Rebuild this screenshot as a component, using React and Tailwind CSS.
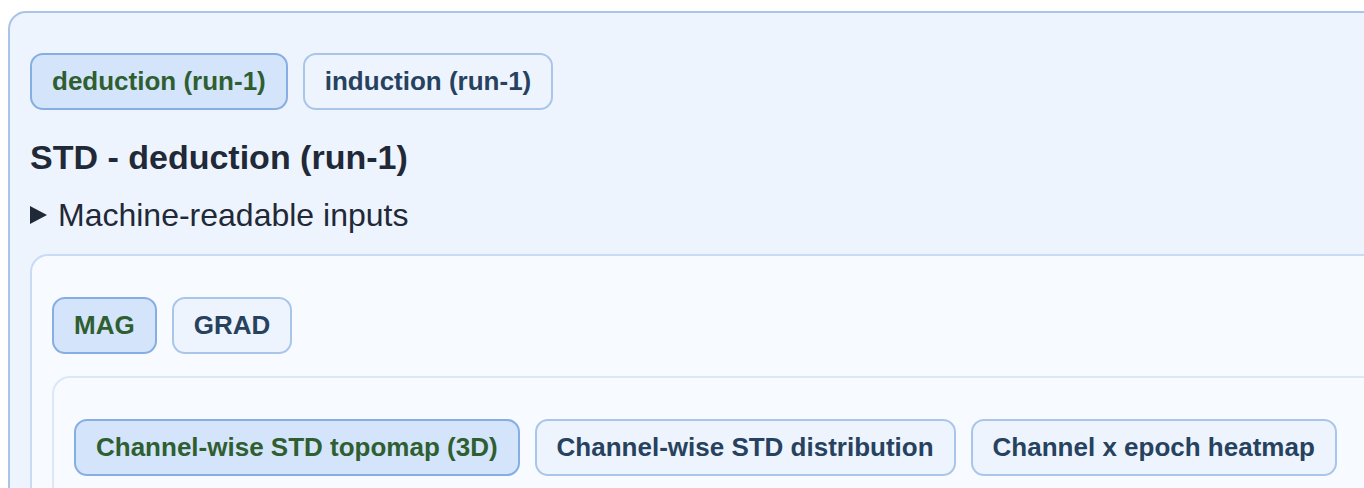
import { useState } from "react";

const FONT = "font-['Liberation_Sans',Arial,sans-serif]";

function TabButton({ label, active, onClick }) {
  return (
    <button
      onClick={onClick}
      className={
        active
          ? "flex h-[57px] items-center rounded-[13px] border-2 border-[#87aee2] bg-[#d4e4fb] px-5 text-[26px] font-bold text-[#2f5e31]"
          : "flex h-[57px] items-center rounded-[13px] border-2 border-[#a9c6ea] bg-[#edf4fe] px-5 text-[26px] font-bold text-[#27425f]"
      }
    >
      {label}
    </button>
  );
}

function TabRow({ items, value, onChange }) {
  return (
    <div className="flex gap-[15px]">
      {items.map((it) => (
        <TabButton key={it} label={it} active={it === value} onClick={() => onChange(it)} />
      ))}
    </div>
  );
}

export default function App() {
  const [run, setRun] = useState("deduction (run-1)");
  const [sensor, setSensor] = useState("MAG");
  const [plot, setPlot] = useState("Channel-wise STD topomap (3D)");

  return (
    <div className={`h-[488px] w-full overflow-hidden bg-white pl-2 pt-[11px] ${FONT}`}>
      {/* Outer run panel */}
      <div className="w-[1420px] rounded-[18px] border-2 border-[#a9c4e8] bg-[#edf4fe] px-5 pt-10 pb-10">
        <TabRow
          items={["deduction (run-1)", "induction (run-1)"]}
          value={run}
          onChange={setRun}
        />

        <h2 className="mt-[27px] text-[34px] font-bold leading-[40px] text-[#1f2937]">
          STD - {run}
        </h2>

        <div className="mt-[18px] flex h-10 items-center gap-[11px] text-[32px] text-[#1f2937]">
          <svg width="17" height="18" viewBox="0 0 17 18" className="shrink-0">
            <polygon points="0,0 17,9 0,18" fill="#1f2937" />
          </svg>
          <span>Machine-readable inputs</span>
        </div>

        {/* Sensor panel */}
        <div className="mt-[19px] rounded-[18px] border-2 border-[#c9dbf3] bg-[#f7faff] px-5 pt-[41px] pb-10">
          <TabRow items={["MAG", "GRAD"]} value={sensor} onChange={setSensor} />

          {/* Plot panel */}
          <div className="mt-[22px] rounded-[18px] border-2 border-[#dde8f7] bg-[#f7faff] px-5 pt-[41px] pb-10">
            <TabRow
              items={[
                "Channel-wise STD topomap (3D)",
                "Channel-wise STD distribution",
                "Channel x epoch heatmap",
              ]}
              value={plot}
              onChange={setPlot}
            />
          </div>
        </div>
      </div>
    </div>
  );
}
